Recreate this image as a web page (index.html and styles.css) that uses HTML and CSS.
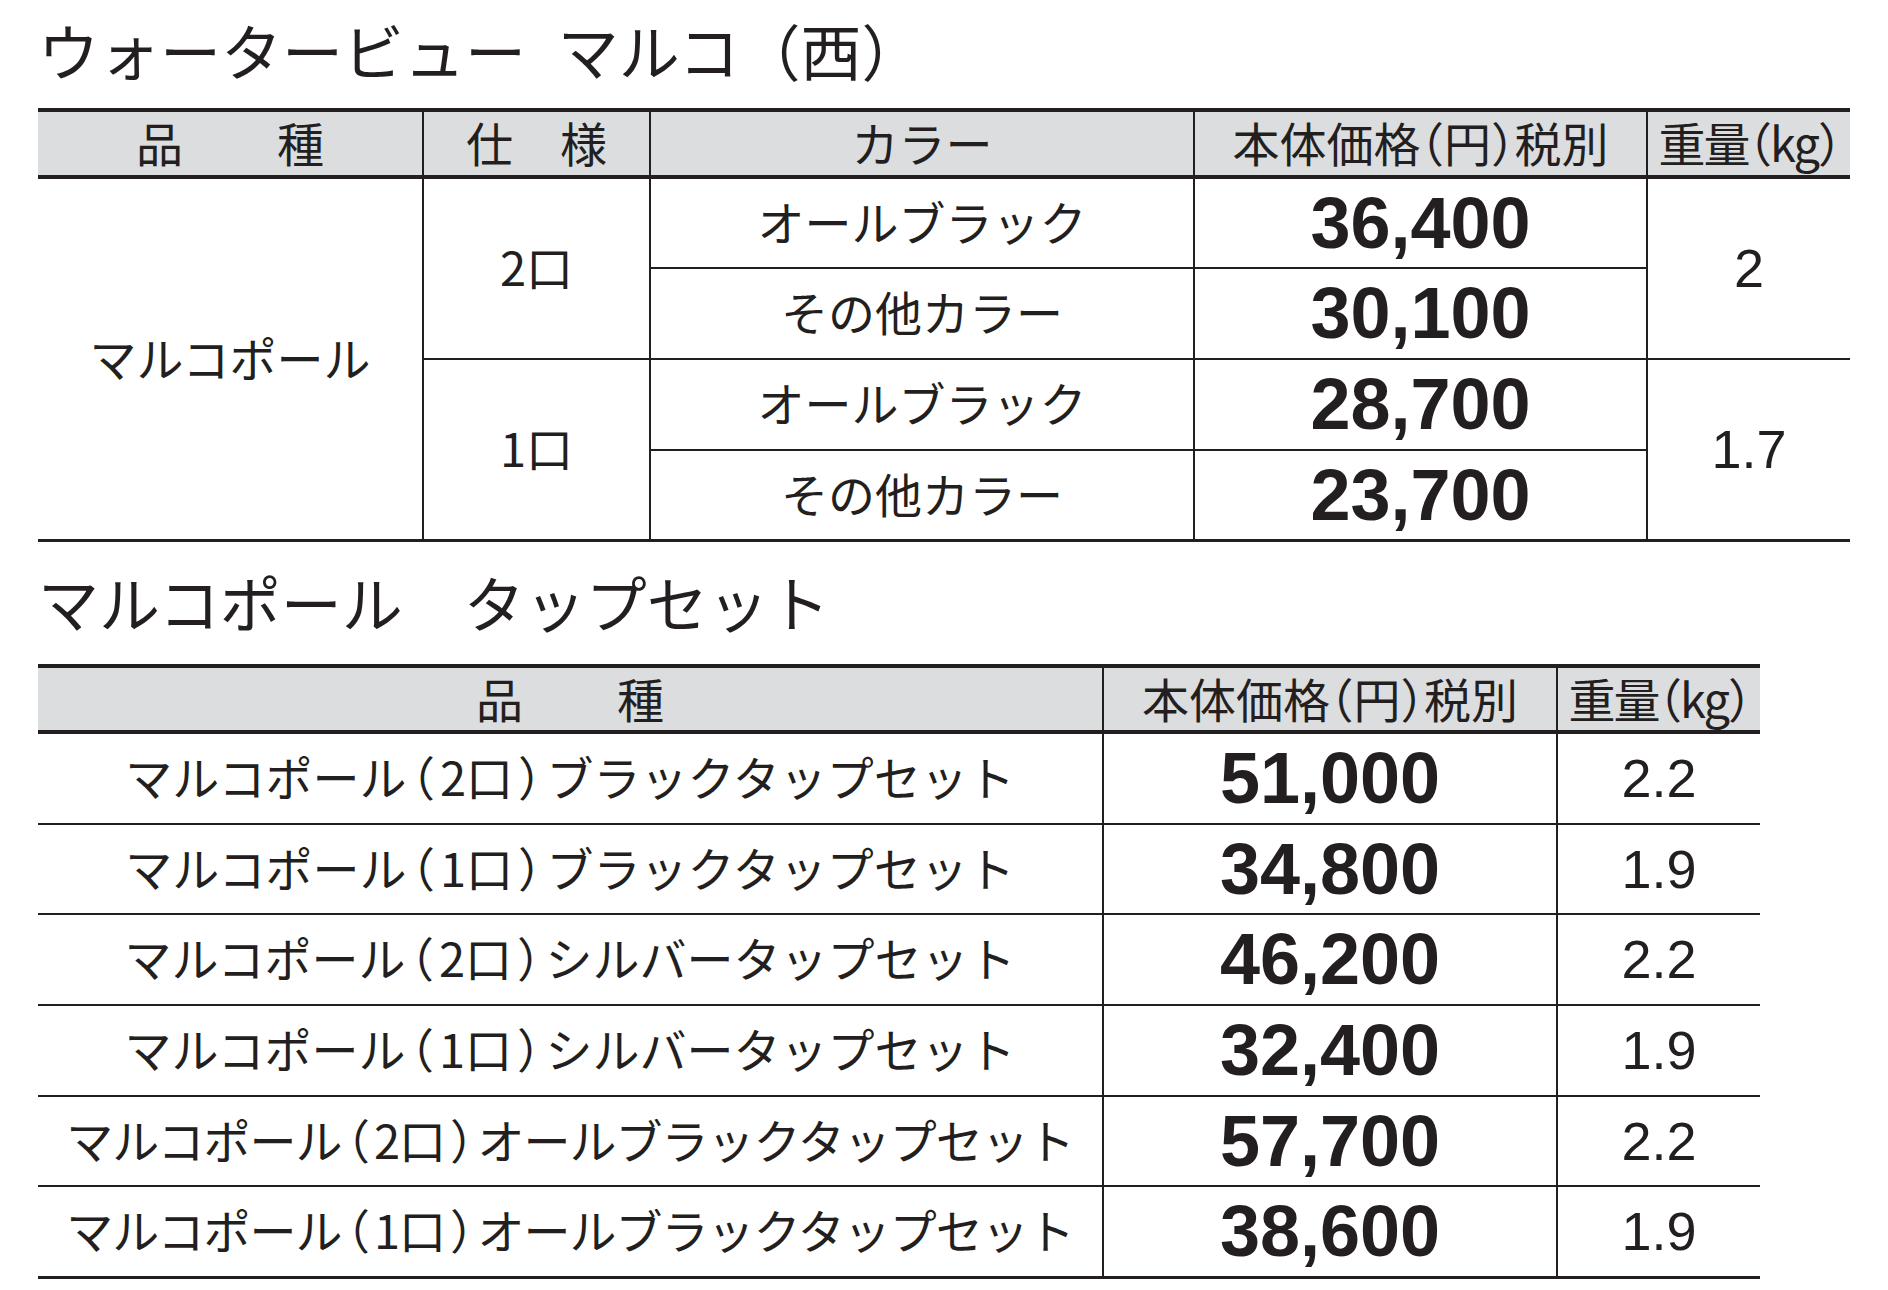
FILE: index.html
```html
<!DOCTYPE html>
<html lang="ja">
<head>
<meta charset="utf-8">
<title>ウォータービュー マルコ（西）</title>
<link rel="stylesheet" href="styles.css">
</head>
<body>
<div class="page">
  <h1 class="title title-first">ウォータービュー マルコ（西<span class="hp">）</span></h1>

  <div class="grid t1">
    <div class="cell head">品　　種</div>
    <div class="cell head">仕　様</div>
    <div class="cell head">カラー</div>
    <div class="cell head">本体価格<span class="hp">（</span>円<span class="hp">）</span>税別</div>
    <div class="cell head kgh">重量<span class="hp">（</span>kg<span class="hp">）</span></div>

    <div class="cell span4">マルコポール</div>
    <div class="cell span2">2口</div>
    <div class="cell">オールブラック</div>
    <div class="cell price">36,400</div>
    <div class="cell span2 weight">2</div>

    <div class="cell">その他カラー</div>
    <div class="cell price">30,100</div>

    <div class="cell span2">1口</div>
    <div class="cell">オールブラック</div>
    <div class="cell price">28,700</div>
    <div class="cell span2 weight">1.7</div>

    <div class="cell">その他カラー</div>
    <div class="cell price">23,700</div>
  </div>

  <h2 class="title title-second">マルコポール　タップセット</h2>

  <div class="grid t2">
    <div class="cell head">品　　種</div>
    <div class="cell head">本体価格<span class="hp">（</span>円<span class="hp">）</span>税別</div>
    <div class="cell head kgh">重量<span class="hp">（</span>kg<span class="hp">）</span></div>

    <div class="cell">マルコポール<span class="bp">（</span>2口<span class="bp">）</span>ブラックタップセット</div>
    <div class="cell price">51,000</div>
    <div class="cell weight">2.2</div>

    <div class="cell">マルコポール<span class="bp">（</span>1口<span class="bp">）</span>ブラックタップセット</div>
    <div class="cell price">34,800</div>
    <div class="cell weight">1.9</div>

    <div class="cell">マルコポール<span class="bp">（</span>2口<span class="bp">）</span>シルバータップセット</div>
    <div class="cell price">46,200</div>
    <div class="cell weight">2.2</div>

    <div class="cell">マルコポール<span class="bp">（</span>1口<span class="bp">）</span>シルバータップセット</div>
    <div class="cell price">32,400</div>
    <div class="cell weight">1.9</div>

    <div class="cell tight">マルコポール<span class="bp">（</span>2口<span class="bp">）</span>オールブラックタップセット</div>
    <div class="cell price">57,700</div>
    <div class="cell weight">2.2</div>

    <div class="cell tight">マルコポール<span class="bp">（</span>1口<span class="bp">）</span>オールブラックタップセット</div>
    <div class="cell price">38,600</div>
    <div class="cell weight">1.9</div>
  </div>
</div>
</body>
</html>
```

FILE: styles.css
```css
html, body {
  margin: 0;
  padding: 0;
  background: #ffffff;
}

body {
  color: #231f20;
  font-family: "Noto Sans CJK JP", "Noto Sans", sans-serif;
}

.page {
  padding-left: 38px;
}

.title {
  margin: 0;
  font-weight: 400;
  font-size: 61px;
  line-height: 61px;
  white-space: nowrap;
}

.title-first {
  height: 108px;
  box-sizing: border-box;
  padding-top: 19px;
  word-spacing: 18px;
}

.title-second {
  height: 122px;
  box-sizing: border-box;
  padding-top: 29px;
}

.hp {
  font-feature-settings: "halt";
}

.bp {
  font-feature-settings: "halt";
  margin: 0 5px;
}

.grid {
  display: grid;
  background: #231f20;
  border-top: 4px solid #231f20;
  border-bottom: 3px solid #231f20;
  column-gap: 2px;
  row-gap: 2px;
}

.t1 {
  width: 1812px;
  grid-template-columns: 384px 225px 542px 451px 202px;
  grid-template-rows: 65px 88px 89px 89px 88px;
}

.t2 {
  width: 1722px;
  grid-template-columns: 1064px 452px 202px;
  grid-template-rows: 64px 89px 88px 89px 89px 88px 89px;
}

.cell {
  background: #ffffff;
  display: flex;
  align-items: center;
  justify-content: center;
  font-size: 47px;
  line-height: 1;
  white-space: nowrap;
  box-sizing: border-box;
  padding-bottom: 6px;
}

.head {
  background: #dcdddf;
  border-bottom: 2px solid #231f20;
  padding-bottom: 4px;
}

.kgh {
  letter-spacing: -2px;
}

.tight {
  letter-spacing: -1px;
}

.span4 {
  grid-row: span 4;
}

.span2 {
  grid-row: span 2;
}

.price {
  font-family: "Liberation Sans", Arial, sans-serif;
  font-weight: 700;
  font-size: 72px;
  padding-bottom: 1px;
}

.weight {
  font-family: "Liberation Sans", Arial, sans-serif;
  font-size: 54px;
  padding-bottom: 1px;
}
```
